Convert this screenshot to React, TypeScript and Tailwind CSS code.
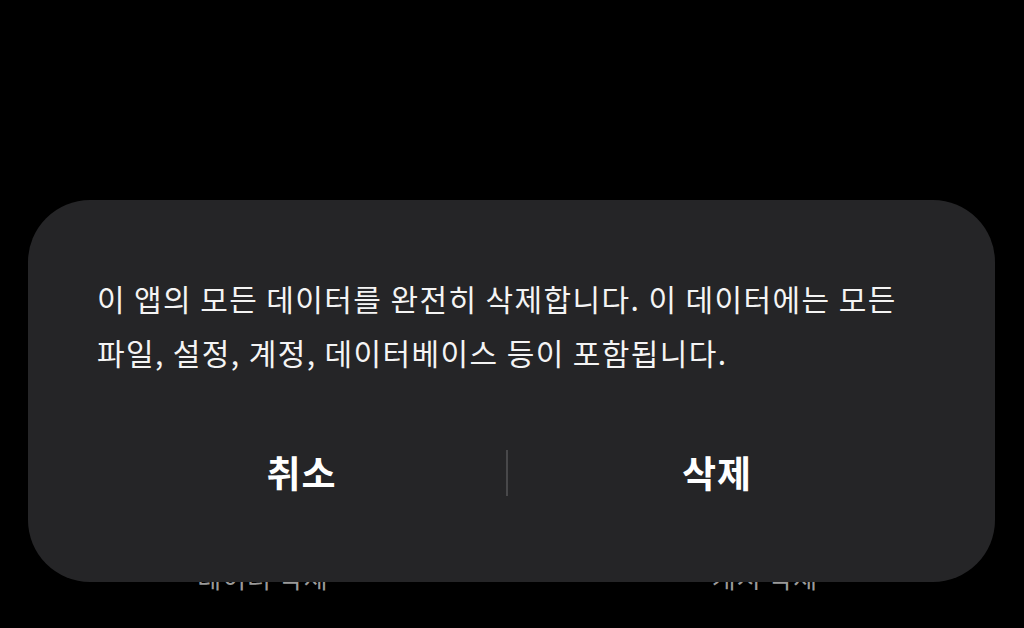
export default function App() {
  return (
    <div
      className="relative w-[1024px] h-[628px] overflow-hidden bg-black"
      style={{ fontFamily: '"Noto Sans CJK KR", "Noto Sans", sans-serif' }}
    >
      {/* settings page behind the dialog */}
      <div className="flex h-full items-end pb-[38px] text-[26px] leading-[26px] tracking-[1px] text-[#9a9a9a]">
        <div className="flex w-[512px] justify-center pl-[14px]">데이터 삭제</div>
        <div className="flex w-[512px] justify-center pr-[6px]">캐시 삭제</div>
      </div>

      {/* confirm dialog */}
      <div className="absolute left-[28px] top-[200px] flex h-[382px] w-[967px] flex-col rounded-[62px] bg-[#252527] px-[69px] pt-[71px]">
        <p className="whitespace-nowrap text-[30px] leading-[54px] tracking-[1.4px] text-[#f4f4f4]">
          이 앱의 모든 데이터를 완전히 삭제합니다. 이 데이터에는 모든
          <br />
          파일, 설정, 계정, 데이터베이스 등이 포함됩니다.
        </p>
        <div className="mt-[64px] flex h-[60px] items-center">
          <button className="flex w-[409px] justify-center text-[37px] font-bold tracking-[1px] text-white">취소</button>
          <div className="h-[46px] w-[2px] bg-[#48484a]" />
          <button className="flex flex-1 justify-center text-[37px] font-bold tracking-[1px] text-white">삭제</button>
        </div>
      </div>
    </div>
  );
}
